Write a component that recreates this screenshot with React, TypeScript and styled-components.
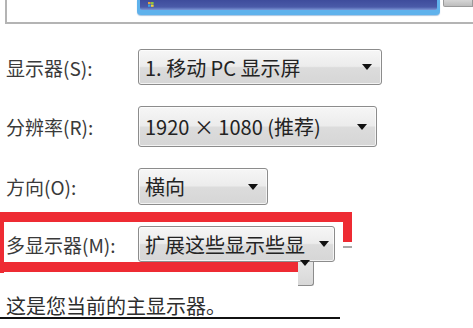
import React from 'react';
import styled, { createGlobalStyle } from 'styled-components';

const GlobalStyle = createGlobalStyle`
  html, body {
    margin: 0;
    padding: 0;
    background: #ffffff;
    overflow: hidden;
  }
  body {
    font-family: "Noto Sans CJK SC", "Noto Sans", sans-serif;
  }
`;

const Page = styled.div`
  width: 473px;
  height: 328px;
  display: flex;
  flex-direction: column;
  background: #ffffff;
  overflow: hidden;
`;

const PreviewFrame = styled.div`
  height: 22px;
  margin-left: 5px;
  border-left: 2px solid #b4b4b4;
  border-bottom: 2px solid #b4b4b4;
  display: flex;
  align-items: flex-start;
  padding-left: 130px;
  gap: 3px;
`;

const MainMonitor = styled.div`
  width: 297px;
  height: 12px;
  padding: 0 3px 3px 3px;
  background: #5fb2ec;
  border-radius: 0 0 4px 4px;
  box-shadow: 0 1px 1px rgba(40, 110, 180, 0.4);
`;

const MonitorScreen = styled.div`
  height: 10px;
  display: flex;
  align-items: flex-start;
  padding: 2px 0 0 8px;
  box-sizing: border-box;
  background: linear-gradient(#3e4c9c, #4a5aa8 70%, #7b96d6);
  border-radius: 0 0 2px 2px;
`;

const SideMonitor = styled.div`
  flex: 1;
  height: 6px;
  background: linear-gradient(#d6d6d6, #bdbdbd);
  border: 1px solid #9a9a9a;
  border-top: none;
  border-radius: 0 0 0 2px;
`;

const Form = styled.div`
  display: flex;
  flex-direction: column;
  gap: 21px;
  padding-top: 25px;
`;

const Row = styled.div<{ $h: number }>`
  position: relative;
  display: flex;
  align-items: center;
  height: ${({ $h }) => $h}px;
`;

const Label = styled.div`
  width: 138px;
  flex-shrink: 0;
  padding-left: 6px;
  box-sizing: border-box;
  font-size: 19px;
  color: #3a3a3a;
  white-space: nowrap;
`;

const Select = styled.div<{ $w: number; $pr?: number }>`
  width: ${({ $w }) => $w}px;
  flex-shrink: 0;
  height: 100%;
  box-sizing: border-box;
  display: flex;
  align-items: center;
  gap: 4px;
  padding: 0 ${({ $pr }) => $pr ?? 9}px 0 6px;
  border: 1px solid #8c8c8c;
  border-radius: 3px;
  background: linear-gradient(#f6f6f6, #ececec 48%, #dcdcdc 52%, #d6d6d6);
  box-shadow: inset 0 0 0 1px rgba(255, 255, 255, 0.7);
`;

const SelectText = styled.span`
  flex: 1;
  font-size: 20px;
  color: #232323;
  white-space: nowrap;
  overflow: hidden;
`;

const Arrow = styled.span`
  width: 0;
  height: 0;
  border-left: 5.5px solid transparent;
  border-right: 5.5px solid transparent;
  border-top: 6px solid #111;
  flex-shrink: 0;
`;

/* hand-drawn red highlight round the multi-display row */
const Mark = styled.div<{ $l: number; $t: number; $w: number; $hh: number }>`
  position: absolute;
  left: ${({ $l }) => $l}px;
  top: ${({ $t }) => $t}px;
  width: ${({ $w }) => $w}px;
  height: ${({ $hh }) => $hh}px;
  background: #ee2b33;
`;

const Dash = styled.div`
  position: absolute;
  left: 343px;
  top: 20px;
  width: 9px;
  height: 2px;
  background: #a8a8a8;
`;

const Fragment = styled.div`
  position: absolute;
  left: 298px;
  top: 36px;
  width: 16px;
  height: 24px;
  box-sizing: border-box;
  padding: 4px 0 0 2px;
  border-right: 1px solid #8c8c8c;
  border-bottom: 1px solid #8c8c8c;
  border-radius: 0 0 3px 0;
  background: linear-gradient(#e6e6e6, #d8d8d8);
`;

const Footer = styled.div`
  width: 340px;
  margin-top: 33px;
  padding-left: 6px;
  box-sizing: border-box;
  font-size: 20px;
  line-height: 22px;
  color: #2e2e2e;
  border-bottom: 2px solid #111;
`;

const WinLogo = () => (
  <svg width="6" height="5" viewBox="0 0 6 5">
    <rect x="0" y="0" width="2.6" height="2.2" fill="#e8a23a" />
    <rect x="3" y="0" width="2.6" height="2.2" fill="#8cc63f" />
    <rect x="0" y="2.6" width="2.6" height="2.2" fill="#3aa0e8" />
    <rect x="3" y="2.6" width="2.6" height="2.2" fill="#f2d43a" />
  </svg>
);

export default function App() {
  return (
    <Page>
      <GlobalStyle />
      <PreviewFrame>
        <MainMonitor>
          <MonitorScreen>
            <WinLogo />
          </MonitorScreen>
        </MainMonitor>
        <SideMonitor />
      </PreviewFrame>

      <Form>
        <Row $h={36}>
          <Label>显示器(S):</Label>
          <Select $w={244}>
            <SelectText>1. 移动 PC 显示屏</SelectText>
            <Arrow />
          </Select>
        </Row>
        <Row $h={41}>
          <Label>分辨率(R):</Label>
          <Select $w={239}>
            <SelectText>1920 × 1080 (推荐)</SelectText>
            <Arrow />
          </Select>
        </Row>
        <Row $h={37}>
          <Label>方向(O):</Label>
          <Select $w={130}>
            <SelectText>横向</SelectText>
            <Arrow />
          </Select>
        </Row>
        <Row $h={36}>
          <Label>多显示器(M):</Label>
          <Select $w={197} $pr={5}>
            <SelectText>扩展这些显示些显</SelectText>
            <Arrow />
          </Select>
          <Mark $l={0} $t={-14} $w={352} $hh={10} />
          <Mark $l={0} $t={-14} $w={4} $hh={61} />
          <Mark $l={0} $t={36} $w={298} $hh={10} />
          <Mark $l={343} $t={-14} $w={9} $hh={30} />
          <Dash />
          <Fragment>
            <Arrow />
          </Fragment>
        </Row>
      </Form>

      <Footer>这是您当前的主显示器。</Footer>
    </Page>
  );
}
